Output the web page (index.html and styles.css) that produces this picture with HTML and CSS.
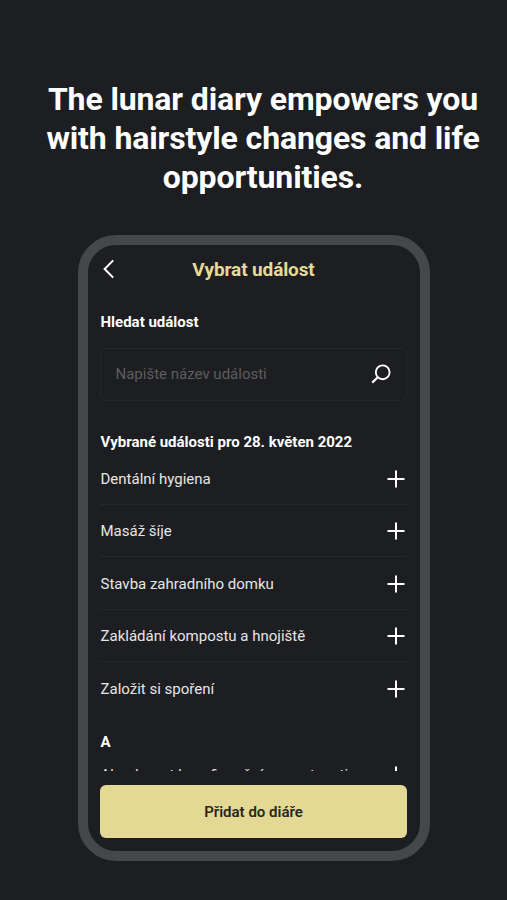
FILE: index.html
```html
<!DOCTYPE html>
<html lang="cs">
<head>
<meta charset="utf-8">
<title>Vybrat událost</title>
<link rel="stylesheet" href="styles.css">
</head>
<body>
<svg class="defs" width="0" height="0">
  <symbol id="plus" viewBox="0 0 18 18"><path d="M9 .5v17M.5 9h17" fill="none" stroke="currentColor" stroke-width="2"/></symbol>
</svg>
<h1 class="headline">The lunar diary empowers you<br>with hairstyle changes and life<br>opportunities.</h1>
<main class="phone">
  <header class="bar">
    <svg class="back" viewBox="0 0 12 20"><path d="M10.2 1.4 1.6 10l8.6 8.6" fill="none" stroke="currentColor" stroke-width="2"/></svg>
    <h2 class="title">Vybrat událost</h2>
  </header>
  <div class="scroll">
    <h3 class="label">Hledat událost</h3>
    <div class="search">
      <span class="placeholder">Napište název události</span>
      <svg class="lens" viewBox="0 0 20 20"><circle cx="11.7" cy="8.3" r="6.9" fill="none" stroke="currentColor" stroke-width="1.9"/><path d="M6.8 13.2 1.2 18.6" stroke="currentColor" stroke-width="2.2"/></svg>
    </div>
    <h3 class="label section">Vybrané události pro 28. květen 2022</h3>
    <ul class="list">
      <li class="item"><span>Dentální hygiena</span><svg class="plus"><use href="#plus"/></svg></li>
      <li class="item"><span>Masáž šíje</span><svg class="plus"><use href="#plus"/></svg></li>
      <li class="item"><span>Stavba zahradního domku</span><svg class="plus"><use href="#plus"/></svg></li>
      <li class="item"><span>Zakládání kompostu a hnojiště</span><svg class="plus"><use href="#plus"/></svg></li>
      <li class="item"><span>Založit si spoření</span><svg class="plus"><use href="#plus"/></svg></li>
    </ul>
    <h3 class="label letter">A</h3>
    <ul class="list partial">
      <li class="item"><span>Absolvovat kurz finanční gramotnosti</span><svg class="plus"><use href="#plus"/></svg></li>
    </ul>
  </div>
  <button class="submit">Přidat do diáře</button>
</main>
</body>
</html>
```
FILE: styles.css
```css
* { box-sizing: border-box; }
body {
  margin: 0;
  height: 900px;
  overflow: hidden;
  background: #1d1e21;
  color: #fff;
  font-family: Roboto, sans-serif;
}
h1, h2, h3, ul { margin: 0; padding: 0; }
.defs { position: absolute; }
.headline {
  padding: 80px 0 0 19px;
  text-align: center;
  font-size: 32px;
  line-height: 39px;
  font-weight: 700;
  letter-spacing: -0.12px;
  white-space: nowrap;
}
.phone {
  display: flex;
  flex-direction: column;
  width: 352px;
  height: 626px;
  margin: 38px 0 0 78px;
  padding: 0 13px 13px 12px;
  border: 10px solid #464749;
  border-radius: 38px;
}
.bar {
  display: flex;
  align-items: center;
  height: 48px;
  padding: 0 3px;
}
.back { width: 12px; height: 20px; }
.title {
  flex: 1;
  padding-right: 12px;
  text-align: center;
  color: #e5da96;
  font-size: 19px;
  font-weight: 700;
  letter-spacing: -0.12px;
}
.scroll { flex: 1; min-height: 0; overflow: hidden; margin-bottom: 14px; }
.label {
  height: 20px;
  margin-top: 18px;
  padding-left: 0.5px;
  font-size: 15px;
  line-height: 22px;
  font-weight: 700;
}
.search {
  display: flex;
  align-items: center;
  justify-content: space-between;
  height: 53px;
  margin-top: 17px;
  padding: 0 15px 2px 14px;
  border: 1.5px solid #26272a;
  border-radius: 6px;
}
.placeholder { padding-left: 0.5px; font-size: 15px; color: #5c5d60; }
.lens { width: 20px; height: 20px; }
.section { margin-top: 30px; }
.list { padding-top: 1.3px; list-style: none; }
.item {
  display: flex;
  align-items: center;
  justify-content: space-between;
  height: 52.5px;
  padding: 1.6px 2px 0 0.5px;
  border-bottom: 1.5px solid #26272a;
  color: #e6e6e7;
  font-size: 15px;
}
.item:last-child { border-bottom-color: transparent; }
.letter { margin-top: 16.7px; }
.partial { margin-top: -4px; }
.plus { width: 18px; height: 18px; color: #fff; }
.submit {
  height: 53px;
  border: 0;
  border-radius: 6px;
  background: #e3d994;
  color: #29261f;
  font: 600 15px Roboto, sans-serif;
}
```
